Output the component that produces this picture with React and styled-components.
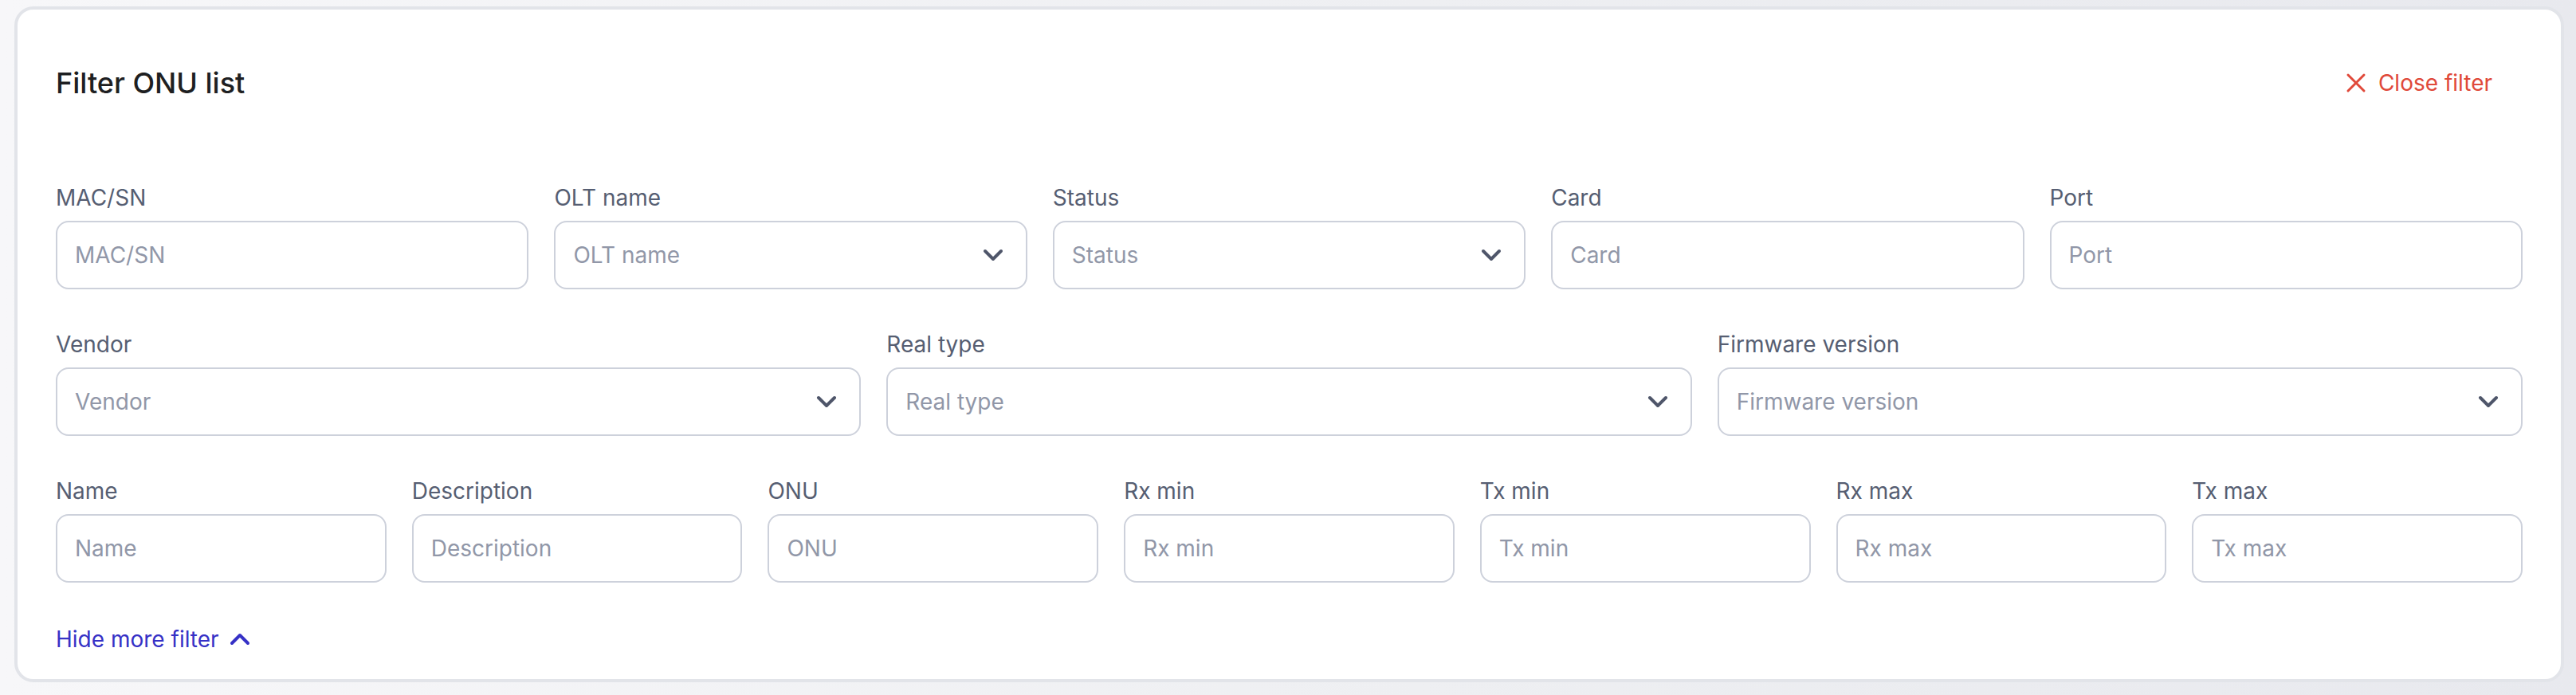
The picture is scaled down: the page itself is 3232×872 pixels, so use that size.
import React from 'react'
import styled, { createGlobalStyle } from 'styled-components'
import { X } from 'lucide-react'

const GlobalStyle = createGlobalStyle`
  html, body {
    margin:0;
    padding:0;
  }
  body {
    font-family: Inter, "Noto Sans", sans-serif;
    background: linear-gradient(90deg, #f7f7f9 0%, #eeeff2 55%, #e8e9ee 100%);
  }
`

const Page = styled.div`
  min-height:872px;
  box-sizing:border-box;
  padding:8px 15px 0 18px;
`
const Card = styled.section`
  background-color:#fff;
  border:4px solid #e2e4e9;
  border-radius:24px;
  padding:48px 48px 30px;
`
const Header = styled.div`
  height:88px;
  display:flex;
  align-items:center;
  justify-content:space-between;
  margin-bottom:80px;
`
const Title = styled.h2`
  margin:0;
  font-size:36px;
  font-weight:500;
  color:#1e1f22;
`
const CloseButton = styled.button`
  display:flex;
  align-items:center;
  gap:8px;
  border:none;
  background:none;
  padding:0 38px 0 32px;
  height:88px;
  font-family:inherit;
  font-size:28px;
  color:#e0493a;
  cursor:pointer;
`
const Rows = styled.div`
  display:flex;
  flex-direction:column;
  gap:49px;
`
const Row = styled.div`
  display:grid;
  grid-template-columns:repeat(${(props) => props.$cols}, 1fr);
  gap:32px;
`
const Field = styled.div`
  display:flex;
  flex-direction:column;
  min-width:0;
`
const Label = styled.label`
  font-size:28px;
  line-height:40px;
  color:#565e72;
  margin-bottom:9px;
`
const Input = styled.input`
  box-sizing:border-box;
  height:86px;
  width:100%;
  border:2px solid #cdd1db;
  border-radius:16px;
  padding:0 22px;
  font-family:inherit;
  font-size:28px;
  color:#1e1f22;
  outline:none;
  &::placeholder {
    color:#9197a8;
  }
`
const Select = styled.div`
  box-sizing:border-box;
  height:86px;
  border:2px solid #cdd1db;
  border-radius:16px;
  padding:0 27px 0 22px;
  display:flex;
  align-items:center;
  justify-content:space-between;
  font-size:28px;
  color:#9197a8;
  cursor:pointer;
`
const Chevron = styled.svg`
  color:${(props) => props.color || '#4f566a'};
  flex-shrink:0;
`
const ToggleLink = styled.button`
  margin-top:51px;
  display:flex;
  align-items:center;
  gap:12px;
  height:40px;
  padding:0;
  border:none;
  background:none;
  font-family:inherit;
  font-size:28px;
  color:#3631c6;
  cursor:pointer;
`

const ChevronIcon = ({ up, color }) => (
  <Chevron width="28" height="18" viewBox="0 0 28 18" fill="none" color={color}>
    <path
      d={up ? 'M4 14l10-10 10 10' : 'M4 4l10 10 10-10'}
      stroke="currentColor"
      strokeWidth="4"
      strokeLinecap="round"
      strokeLinejoin="round"
    />
  </Chevron>
)

const rows = [
  [
    { name: 'MAC/SN' },
    { name: 'OLT name', select: true },
    { name: 'Status', select: true },
    { name: 'Card' },
    { name: 'Port' },
  ],
  [
    { name: 'Vendor', select: true },
    { name: 'Real type', select: true },
    { name: 'Firmware version', select: true },
  ],
  [
    { name: 'Name' },
    { name: 'Description' },
    { name: 'ONU' },
    { name: 'Rx min' },
    { name: 'Tx min' },
    { name: 'Rx max' },
    { name: 'Tx max' },
  ],
]

const App = () => {
  return (
    <Page>
      <GlobalStyle />
      <Card>
        <Header>
          <Title>Filter ONU list</Title>
          <CloseButton>
            <X size={40} strokeWidth={1.8} />
            Close filter
          </CloseButton>
        </Header>
        <Rows>
          {rows.map((row, i) => (
            <Row key={i} $cols={row.length}>
              {row.map((f) => (
                <Field key={f.name}>
                  <Label>{f.name}</Label>
                  {f.select ? (
                    <Select>
                      {f.name}
                      <ChevronIcon />
                    </Select>
                  ) : (
                    <Input placeholder={f.name} />
                  )}
                </Field>
              ))}
            </Row>
          ))}
        </Rows>
        <ToggleLink>
          Hide more filter
          <ChevronIcon up color="#3631c6" />
        </ToggleLink>
      </Card>
    </Page>
  )
}

export default App
